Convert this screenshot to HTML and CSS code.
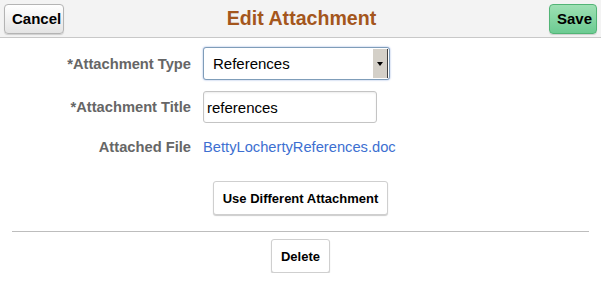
FILE: index.html
```html
<!DOCTYPE html>
<html lang="en">
<head>
    <meta charset="UTF-8">
    <title>Edit Attachment</title>
    <link rel="stylesheet" href="styles.css">
</head>
<body>

<div class="header">
    <button class="hbutton cancel">Cancel</button>
    <h1 class="title">Edit Attachment</h1>
    <button class="hbutton save">Save</button>
</div>

<div class="form">
    <div class="row">
        <label class="label">*Attachment Type</label>
        <div class="select">
            <span class="select-text">References</span>
            <span class="select-arrow"></span>
        </div>
    </div>
    <div class="row">
        <label class="label">*Attachment Title</label>
        <input class="text-input" type="text" value="references">
    </div>
    <div class="row row-file">
        <span class="label">Attached File</span>
        <a class="file-link" href="#">BettyLochertyReferences.doc</a>
    </div>
</div>

<div class="button-container first">
    <button class="button">Use Different Attachment</button>
</div>

<div class="divider"></div>

<div class="button-container">
    <button class="button">Delete</button>
</div>

</body>
</html>
```

FILE: styles.css
```css
body {
    font-family: "Liberation Sans", Arial, sans-serif;
    margin: 0;
    background-color: #ffffff;
}
.header {
    display: grid;
    grid-template-columns: 1fr auto 1fr;
    align-items: center;
    height: 37px;
    padding: 0 4px;
    background-color: #f3f3f3;
    border-bottom: 1px solid #c8c8c8;
}
.title {
    margin: 0 0 0 2px;
    font-size: 19.6px;
    font-weight: bold;
    color: #a4561c;
}
.hbutton {
    height: 30px;
    padding: 0 7px;
    font-family: "Liberation Sans", Arial, sans-serif;
    font-size: 15px;
    font-weight: bold;
    color: #000;
    border-radius: 4px;
    cursor: pointer;
}
.cancel {
    justify-self: start;
    width: 60px;
    border: 1px solid #b4b4b4;
    background: linear-gradient(#ffffff, #e4e4e4);
    box-shadow: 0 1px 1px rgba(0, 0, 0, 0.15);
}
.save {
    justify-self: end;
    width: 48px;
    border: 1px solid #52b476;
    background: linear-gradient(#9ee0b4, #6ccb92);
    box-shadow: 0 1px 1px rgba(0, 0, 0, 0.15);
}
.form {
    display: flex;
    flex-direction: column;
    gap: 11px;
    padding-top: 9px;
}
.row {
    display: grid;
    grid-template-columns: 191px auto;
    column-gap: 12px;
    align-items: center;
}
.label {
    text-align: right;
    font-size: 14.7px;
    font-weight: bold;
    color: #666666;
}
.select {
    display: flex;
    width: 185px;
    height: 31px;
    border: 1px solid #7f9db9;
    border-radius: 3px;
    box-shadow: 0 0 2px #8fa8dc;
    background: #fff;
}
.select-text {
    flex: 1;
    padding-left: 9px;
    line-height: 31px;
    font-size: 15px;
    color: #000;
}
.select-arrow {
    width: 14px;
    margin: 1px;
    background-color: #d4d0c8;
    border-left: 1px solid #fff;
    border-right: 1px solid #404040;
    position: relative;
}
.select-arrow::after {
    content: "";
    position: absolute;
    left: 4px;
    top: 13px;
    border-left: 3px solid transparent;
    border-right: 3px solid transparent;
    border-top: 4px solid #000;
}
.text-input {
    height: 32px;
    box-sizing: border-box;
    width: 174px;
    padding: 0 3px;
    border: 1px solid #c4c4c4;
    border-radius: 3px;
    box-shadow: inset 0 1px 2px rgba(0, 0, 0, 0.08);
    font-family: "Liberation Sans", Arial, sans-serif;
    font-size: 15px;
    color: #000;
}
.row-file {
    margin-top: 5px;
}
.file-link {
    font-size: 14.7px;
    color: #3d6fd1;
    text-decoration: none;
}
.button-container {
    display: flex;
    justify-content: center;
    margin-top: 7px;
}
.button-container.first {
    margin-top: 26px;
}
.button {
    height: 34px;
    padding: 0 9px;
    font-family: "Liberation Sans", Arial, sans-serif;
    font-size: 13px;
    font-weight: bold;
    color: #000;
    background: #fff;
    border: 1px solid #cfcfcf;
    border-radius: 3px;
    box-shadow: 0 1px 1px rgba(0, 0, 0, 0.2);
    cursor: pointer;
}
.divider {
    margin: 16px 12px 0;
    border-top: 1px solid #bdbdbd;
}
```
